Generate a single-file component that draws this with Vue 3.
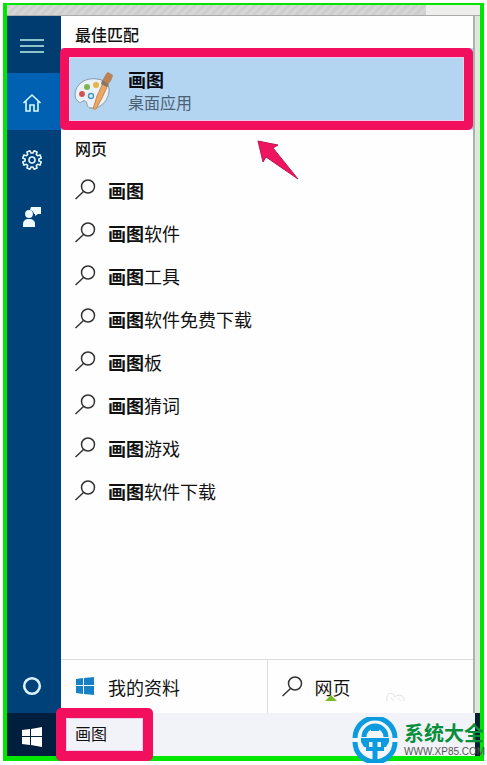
<template>
    <div class="page">
        <div class="screen">
            <div class="desktop"><div class="texture"></div></div>

            <div class="middle">
                <nav class="sidebar">
                    <button class="side menu" aria-label="菜单">
                        <svg width="26" height="16" viewBox="0 0 26 16">
                            <path d="M1 2H25M1 8H25M1 14H25" stroke="#bdf0e4" stroke-width="1.5" />
                        </svg>
                    </button>
                    <button class="side home" aria-label="主页">
                        <svg width="20" height="20" viewBox="0 0 20 20" fill="none" stroke="#d5fbff" stroke-width="1.6">
                            <path d="M1.5 10 10 2l8.500 8M4 8.500V18h4v-6h4v6h4V8.500" />
                        </svg>
                    </button>
                    <button class="side" aria-label="设置">
                        <svg width="22" height="22" viewBox="-11 -11 22 22" fill="none" stroke="#e4f7ff" stroke-width="1.6">
                            <path :d="gear" stroke-linejoin="round" />
                            <circle r="3" />
                        </svg>
                    </button>
                    <button class="side" aria-label="反馈">
                        <svg width="20" height="22" viewBox="0 0 20 22" fill="#effaff">
                            <path d="M9 1h10v7h-3l-3 2V8H12a5 5 0 0 0-4-4z" />
                            <circle cx="7" cy="8" r="3.900" />
                            <path d="M1 21v-3c0-3 2-5 6-5s6 2 6 5v3z" />
                        </svg>
                    </button>
                    <button class="side cortana" aria-label="Cortana">
                        <svg width="20" height="20" viewBox="0 0 20 20">
                            <circle cx="10" cy="10" r="7.800" fill="none" stroke="#d8f2ff" stroke-width="2.600" />
                        </svg>
                    </button>
                </nav>

                <main class="panel">
                    <h2 class="best-title">最佳匹配</h2>
                    <div class="best">
                        <button class="app">
                            <svg width="40" height="40" viewBox="0 0 40 40">
                                <path d="M1 24C1 13 12 6 23 8c11 1 14 9 11 17-3 9-12 14-18 12-4-1-2-6-5-7s-4 3-6 1c-2-1-4-4-4-7z" fill="#eaf1f7" stroke="#8399ad" stroke-width="1" />
                                <path d="M16 36c8 1 15-3 18-11 1-3 1-6 0-9 4 11-5 22-15 22-2 0-3-1-3-2z" fill="#a6b9ca" />
                                <circle cx="8" cy="23" r="2.900" fill="#cf5350" />
                                <circle cx="13" cy="16" r="3" fill="#7fb650" />
                                <circle cx="22" cy="14" r="3" fill="#e5b545" />
                                <circle cx="17" cy="25" r="2.500" fill="#dcefff" stroke="#4c97c4" stroke-width="1.400" />
                                <path d="m29 12-6 13-4 13h3l6-11 6-13z" fill="#e9a965" stroke="#c98752" stroke-width="1" />
                                <path d="M28 10c2-3 3-7 6-9l5 3c-1 4-2 7-5 9z" fill="#b98259" />
                                <path d="m28 9 7 4-2 3-6-3z" fill="#8b7565" />
                            </svg>
                            <span class="app-text">
                                <b>画图</b>
                                <span>桌面应用</span>
                            </span>
                        </button>
                        <div class="mark"></div>
                        <svg class="arrow" width="44" height="44" viewBox="0 0 44 44">
                            <path d="M1 1 21 5l-5 3 25 31L9 17l-3 5z" fill="#ef1460" stroke="#bd1751" stroke-width="1" />
                        </svg>
                    </div>

                    <h2 class="web-title">网页</h2>
                    <ul class="results">
                        <li v-for="item in results" :key="item">
                            <a href="#">
                                <svg width="22" height="22" viewBox="0 0 22 22" fill="none" stroke="#333" stroke-width="1.500">
                                    <circle cx="13" cy="7.500" r="6.500" /><path d="M8.500 12.500 0.500 20" />
                                </svg>
                                <span><b>画图</b>{{ item }}</span>
                            </a>
                        </li>
                    </ul>

                    <div class="scopes">
                        <button>
                            <svg width="22" height="22" viewBox="0 0 22 22" fill="#1681c5">
                                <path d="m1 3 7-1v7H1zM9 2l10-1v8H9zM1 10h7v8l-7-1zM9 10h10v9L9 18z" />
                            </svg>
                            我的资料
                        </button>
                        <button>
                            <svg width="22" height="22" viewBox="0 0 22 22" fill="none" stroke="#333" stroke-width="1.500">
                                <circle cx="13" cy="7.500" r="6.500" /><path d="M8.500 12.500 0.500 20" />
                            </svg>
                            网页
                            <i class="tip"></i>
                            <svg class="cloud" width="20" height="8" viewBox="0 0 20 8" fill="none" stroke="#e2e2e2">
                                <path d="M1 8V5a4 4 0 0 1 8-1 5 4 0 0 1 9 1v3M5 5l3 3M12 5l3 3" />
                            </svg>
                        </button>
                    </div>
                </main>
            </div>

            <div class="taskbar">
                <button class="start" aria-label="开始">
                    <svg width="22" height="22" viewBox="0 0 22 22" fill="#fff">
                        <path d="m1 4 8-1v7H1zM10 3l11-2v9H10zM1 11h8v8l-8-1zM10 11h11v10l-11-2z" />
                    </svg>
                </button>
                <div class="search">
                    <input v-model="query" type="text" aria-label="搜索">
                    <div class="mark small"></div>
                </div>
            </div>
        </div>

        <div class="brand">
            <svg width="46" height="46" viewBox="0 0 46 46">
                <circle cx="23" cy="23" r="22" fill="#f5f8fb" />
                <g fill="none" stroke="#0c9bde">
                    <path d="M3 21a20 20 0 0 1 40 0M3 25a20 20 0 0 0 40 0" stroke-width="5" />
                    <path d="M12 20a11 11 0 0 1 22 0" stroke-width="5" />
                    <path d="M9 23h28M14 32h18" stroke-width="4" />
                    <path d="M23 23v20" stroke-width="5" />
                </g>
                <path d="M9 25h8v5h-5zM29 25h8l-3 5h-5zM19 9h8v5h-8z" fill="#0c9bde" />
            </svg>
            <div class="brand-text">
                <strong>系统大全</strong>
                <span>WWW.XP85.COM</span>
            </div>
        </div>
    </div>
</template>

<script setup>
import { ref } from 'vue';

const query = ref('画图');
const results = ['', '软件', '工具', '软件免费下载', '板', '猜词', '游戏', '软件下载'];

// eight teeth, four corners for each one
const gear = 'M' + Array.from({ length: 32 }, (_, i) => {
    const angle = (Math.floor(i / 4) * 45 + 22.5 + [-15, -10, 10, 15][i % 4]) * Math.PI / 180;
    const r = [7, 9.5, 9.5, 7][i % 4];
    return `${(r * Math.cos(angle)).toFixed(2)} ${(r * Math.sin(angle)).toFixed(2)}`;
}).join('L') + 'Z';
</script>

<style>
body {
    background: #fff;
}
</style>

<style scoped>
* {
    box-sizing: border-box;
}

.page {
    position: relative;
    display: flex;
    min-height: 100vh;
    padding: 3px 3px 4px;
    overflow: hidden;
    color: #111;
    font-family: "Noto Sans CJK SC", sans-serif;
}

.screen {
    flex: 1;
    display: flex;
    flex-direction: column;
    border: 4px solid #00e600;
    border-top-width: 2px;
    border-bottom-width: 5px;
}

.desktop {
    height: 11px;
    padding-right: 54px;
    background: #ededeb;
    border-bottom: 1px solid #aaa;
}

.texture {
    height: 10px;
    background: repeating-linear-gradient(135deg, #cecece 0 3px, #d6d6d6 3px 6px);
}

.middle {
    flex: 1;
    display: flex;
    padding-right: 5px;
    background: #dcebd8;
}

button {
    padding: 0;
    border: 0;
    background: none;
    color: inherit;
    font-family: inherit;
}

svg {
    display: block;
    flex-shrink: 0;
}

.sidebar {
    display: flex;
    flex-direction: column;
    width: 54px;
    background: #00417a;
}

.side {
    display: flex;
    align-items: center;
    justify-content: center;
    height: 57px;
    padding-top: 2px;
    padding-right: 4px;
}

.menu {
    background: #003c70;
}

.home {
    background: #0061b3;
}

.cortana {
    margin-top: auto;
}

.panel {
    flex: 1;
    display: flex;
    flex-direction: column;
    background: #fefefe;
    border-right: 2px solid #b0b0b0;
}

h2 {
    margin: 0;
    padding: 6px 14px 2px;
    font-size: 16px;
    font-weight: 500;
    line-height: 24px;
}

.web-title {
    padding-bottom: 8px;
}

.best {
    position: relative;
    height: 82px;
}

.app {
    display: flex;
    align-items: center;
    gap: 14px;
    width: 100%;
    height: 100%;
    padding-top: 4px;
    padding-left: 13px;
    background: #b4d5f1;
    text-align: left;
}

.app-text {
    display: flex;
    flex-direction: column;
    font-size: 16px;
    line-height: 23px;
    color: #4a6175;
}

.app-text b {
    color: #0a0a12;
    font-size: 18px;
}

.mark {
    position: absolute;
    inset: 0 0 0 -1px;
    border: 9px solid #f10f5e;
    border-radius: 5px;
    box-shadow: inset 0 0 0 1px #e9cdee;
    pointer-events: none;
}

.arrow {
    position: absolute;
    top: 92px;
    left: 196px;
}

.results {
    margin: 0;
    padding: 0;
    list-style: none;
}

.results a {
    display: flex;
    align-items: center;
    gap: 11px;
    height: 43px;
    padding-left: 14px;
    color: inherit;
    font-size: 18px;
    text-decoration: none;
}

.scopes {
    display: flex;
    height: 54px;
    margin-top: auto;
    border-top: 1px solid #dcdcdc;
}

.scopes button {
    position: relative;
    flex: 1;
    display: flex;
    align-items: center;
    gap: 11px;
    padding-left: 14px;
    font-size: 18px;
}

.scopes button + button {
    border-left: 1px solid #dcdcdc;
}

.tip {
    position: absolute;
    bottom: 12px;
    left: 57px;
    border: 6px solid transparent;
    border-top-width: 0;
    border-bottom-color: #79bb26;
}

.cloud {
    position: absolute;
    bottom: 12px;
    left: 118px;
}

.taskbar {
    display: flex;
    height: 43px;
    padding-right: 5px;
    background: #07202e;
}

.start {
    display: flex;
    align-items: center;
    justify-content: center;
    width: 54px;
    padding: 4px 4px 0 0;
    background: #001f3e;
}

.search {
    position: relative;
    flex: 1;
    background: #f2f3f8;
}

.search input {
    width: 100%;
    height: 100%;
    padding: 0 14px 3px;
    border: 0;
    outline: 0;
    background: none;
    color: #111;
    font-family: inherit;
    font-size: 16px;
}

.small {
    inset: -5px auto -5px -5px;
    width: 97px;
    border-width: 10px;
}

.brand {
    position: absolute;
    right: 0;
    bottom: 2px;
    display: flex;
    align-items: center;
    gap: 6px;
    width: 135px;
}

.brand-text {
    display: flex;
    flex-direction: column;
    white-space: nowrap;
}

.brand-text strong {
    color: #078f3b;
    font-size: 20px;
    line-height: 24px;
}

.brand-text span {
    color: #555;
    font-family: "Liberation Sans", sans-serif;
    font-size: 10px;
    line-height: 14px;
}
</style>
